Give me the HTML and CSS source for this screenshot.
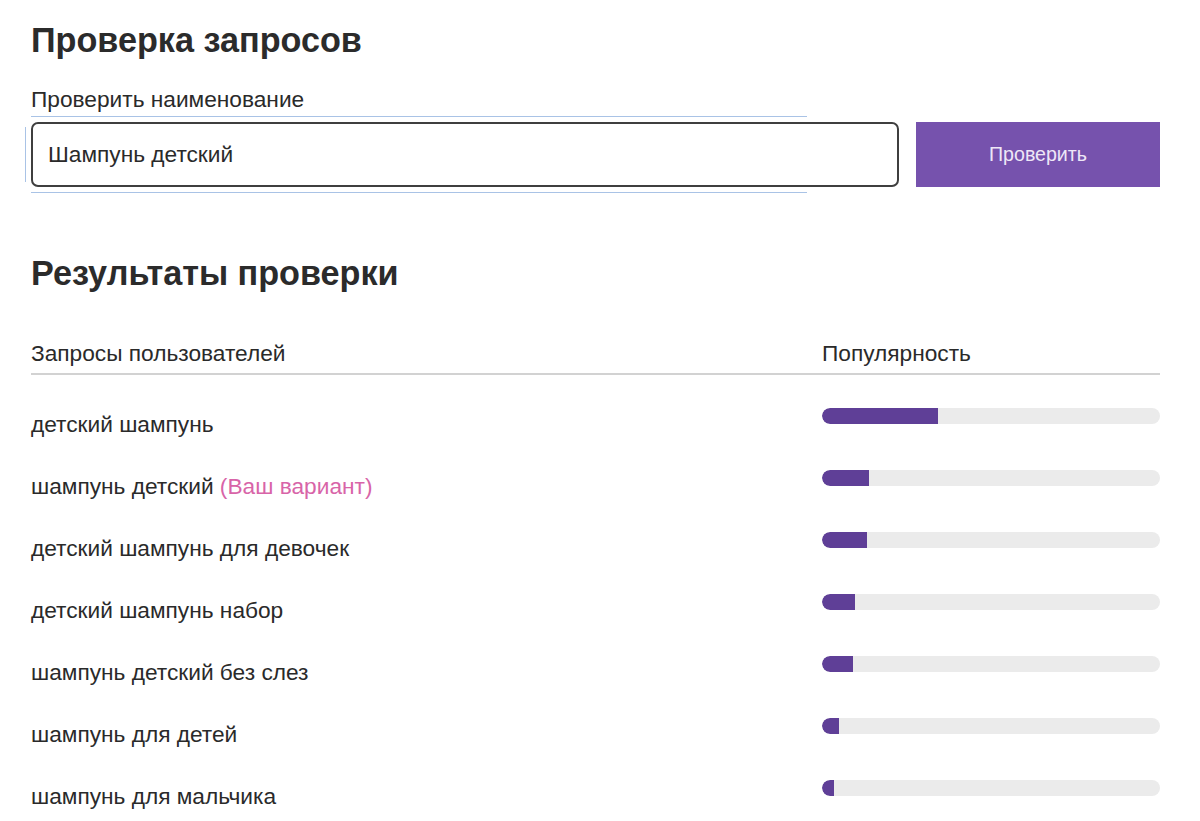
FILE: index.html
```html
<!DOCTYPE html>
<html lang="ru">
<head>
<meta charset="utf-8">
<link rel="stylesheet" href="styles.css">
</head>
<body>
<div class="page">
  <h1 class="title">Проверка запросов</h1>
  <div class="label">Проверить наименование</div>
  <div class="form">
    <div class="field">
      <span class="guide guide-top"></span>
      <span class="guide guide-left"></span>
      <div class="input">Шампунь детский</div>
      <span class="guide guide-bottom"></span>
    </div>
    <button class="btn">Проверить</button>
  </div>

  <h2 class="title results-title">Результаты проверки</h2>
  <div class="table">
    <div class="head">
      <div class="col-q">Запросы пользователей</div>
      <div class="col-p">Популярность</div>
    </div>
    <div class="rows">
      <div class="row"><div class="col-q">детский шампунь</div><div class="col-p"><div class="track"><div class="fill" style="width:116px"></div></div></div></div>
      <div class="row"><div class="col-q">шампунь детский <span class="mine">(Ваш вариант)</span></div><div class="col-p"><div class="track"><div class="fill" style="width:47px"></div></div></div></div>
      <div class="row"><div class="col-q">детский шампунь для девочек</div><div class="col-p"><div class="track"><div class="fill" style="width:45px"></div></div></div></div>
      <div class="row"><div class="col-q">детский шампунь набор</div><div class="col-p"><div class="track"><div class="fill" style="width:33px"></div></div></div></div>
      <div class="row"><div class="col-q">шампунь детский без слез</div><div class="col-p"><div class="track"><div class="fill" style="width:31px"></div></div></div></div>
      <div class="row"><div class="col-q">шампунь для детей</div><div class="col-p"><div class="track"><div class="fill" style="width:17px"></div></div></div></div>
      <div class="row"><div class="col-q">шампунь для мальчика</div><div class="col-p"><div class="track"><div class="fill" style="width:12px"></div></div></div></div>
    </div>
  </div>
</div>
</body>
</html>
```

FILE: styles.css
```css
html, body {
  margin: 0;
  padding: 0;
  background: #ffffff;
}
body {
  font-family: "Liberation Sans", Arial, sans-serif;
  color: #2a2a2a;
}
.page {
  width: 1129px;
  padding: 18px 0 0 31px;
}
.title {
  margin: 0;
  font-size: 34.2px;
  font-weight: 700;
  line-height: 44px;
  color: #2b2b2b;
}
.label {
  margin-top: 23px;
  font-size: 22.7px;
  line-height: 28px;
  color: #2a2a2a;
}
.form {
  display: flex;
  gap: 17px;
  margin-top: 9px;
}
.field {
  position: relative;
  flex: 1;
}
.guide {
  position: absolute;
  background: #a9c3e6;
}
.guide-top { left: 0; top: -6px; width: 776px; height: 1px; }
.guide-bottom { left: 0; bottom: -6px; width: 776px; height: 1px; }
.guide-left { left: -6px; top: 5px; width: 1px; height: 55px; }
.input {
  box-sizing: border-box;
  height: 65px;
  border: 2px solid #3f3f3f;
  border-radius: 7px;
  padding: 0 0 0 15px;
  display: flex;
  align-items: center;
  font-size: 22.7px;
  color: #2a2a2a;
  background: #fff;
}
.btn {
  width: 244px;
  height: 65px;
  border: 0;
  border-radius: 0;
  background: #7652ad;
  color: #eee7f7;
  font-family: "Liberation Sans", Arial, sans-serif;
  font-size: 19.6px;
  padding: 0;
}
.results-title {
  margin-top: 64px;
}
.table {
  margin-top: 44px;
}
.head {
  display: flex;
  font-size: 22.7px;
  line-height: 28px;
  padding-bottom: 6px;
  border-bottom: 2px solid #d2d2d2;
}
.col-q {
  width: 791px;
}
.col-p {
  flex: 1;
}
.rows {
  margin-top: 18px;
}
.row {
  display: flex;
  align-items: center;
  height: 62px;
  font-size: 22.7px;
}
.mine {
  color: #d864a8;
}
.track {
  height: 16px;
  border-radius: 8px;
  background: #ebebeb;
  overflow: hidden;
  margin-top: -16px;
}
.fill {
  height: 100%;
  background: #5f3f97;
  border-radius: 8px 0 0 8px;
}
```
